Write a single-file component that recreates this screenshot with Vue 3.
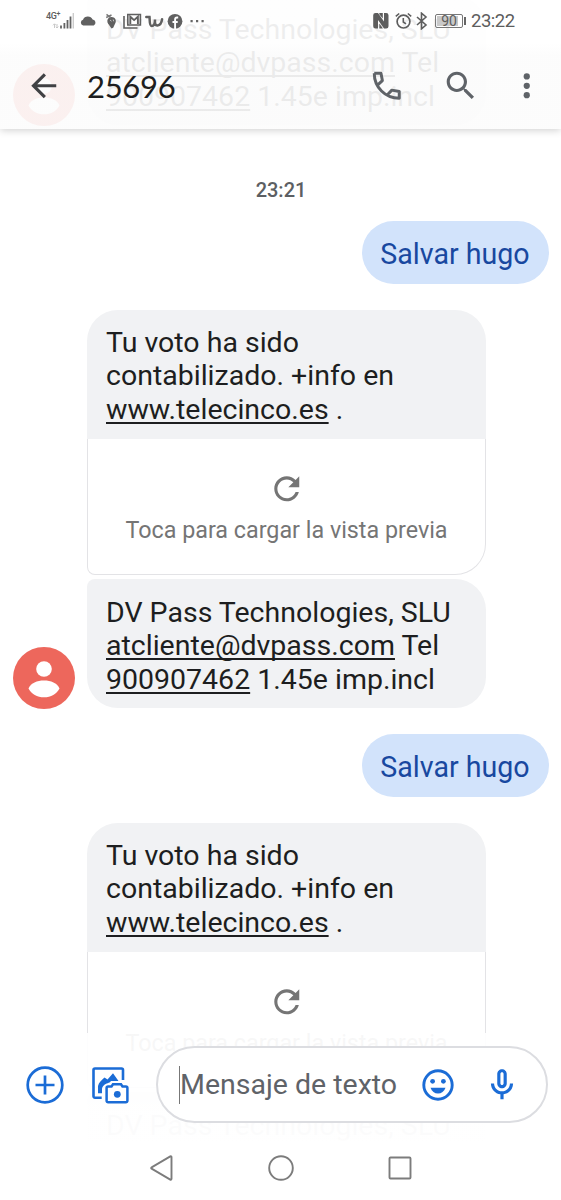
<script setup>
const messages = [
  { id: 1, type: 'legal', cls: 'first' },
  { id: 2, type: 'time', text: '23:21' },
  { id: 3, type: 'sent', text: 'Salvar hugo' },
  { id: 4, type: 'vote' },
  { id: 5, type: 'legal' },
  { id: 6, type: 'sent', text: 'Salvar hugo', cls: 'next' },
  { id: 7, type: 'vote' },
  { id: 8, type: 'legal' }
]
</script>

<template>
  <div class="phone">
    <main class="thread">
      <template v-for="m in messages" :key="m.id">
        <div v-if="m.type === 'time'" class="time">{{ m.text }}</div>

        <div v-else-if="m.type === 'sent'" class="sent" :class="m.cls">{{ m.text }}</div>

        <div v-else-if="m.type === 'vote'" class="vote">
          <div class="vote-text">
            <div class="line">Tu voto ha sido</div>
            <div class="line">contabilizado. +info en</div>
            <div class="line"><span class="link">www.telecinco.es</span> .</div>
          </div>
          <div class="preview">
            <svg class="icon" viewBox="0 0 24 24"><path d="M17.65 6.35C16.2 4.9 14.21 4 12 4c-4.42 0-7.99 3.58-7.99 8s3.57 8 7.99 8c3.73 0 6.84-2.55 7.73-6h-2.08c-.82 2.33-3.04 4-5.65 4-3.31 0-6-2.69-6-6s2.69-6 6-6c1.66 0 3.14.69 4.22 1.78L13 11h7V4l-2.35 2.35z" /></svg>
            <span>Toca para cargar la vista previa</span>
          </div>
        </div>

        <div v-else class="legal-row" :class="m.cls">
          <svg class="avatar" viewBox="0 0 62 62">
            <circle cx="31" cy="31" r="31" fill="#ed675c" />
            <circle cx="31" cy="22" r="7.8" fill="#fff" />
            <path d="M15.5 41.4C18 36 24 33.6 31 33.6S44 36 46.500 41.400C43.500 47 38 50.200 31 50.200S18.500 47 15.500 41.400Z" fill="#fff" />
          </svg>
          <div class="legal">
            <div class="line">DV Pass Technologies, SLU</div>
            <div class="line"><span class="link">atcliente@dvpass.com</span> Tel</div>
            <div class="line"><span class="link">900907462</span> 1.45e imp.incl</div>
          </div>
        </div>
      </template>
    </main>

    <header class="top">
      <div class="status">
        <div class="status-left">
          <span class="net">4G<sup>+</sup></span>
          <svg class="bars" width="22" height="18" viewBox="0 0 22 18">
            <path d="M2.500 16v-4M1 13.300l1.500-1.500 1.500 1.500M5 12v4M3.800 14.800L5 16l1.400-1.400" fill="none" stroke="#c8c8c8" stroke-width="1" />
            <path d="M9 13.500v3M12.400 11v5.500M15.500 8v8.500M18.500 4.500v12" stroke="#636363" stroke-width="1.800" />
            <path d="M21.300 1v15.500" stroke="#ccc" stroke-width="1.400" />
          </svg>
          <svg class="cloud" width="17" height="18" viewBox="0 0 17 18"><path d="M3.200 13.500a3 3 0 0 1-.2-5.800A5.200 5.200 0 0 1 12.600 7.600 3.100 3.100 0 0 1 13.700 13.500Z" fill="#606060" /></svg>
          <svg class="pin" width="12" height="18" viewBox="0 0 12 18">
            <path d="M6.500 16.500 3 11.500C1.600 9.200 2.300 5.700 5.800 5 9.500 4.500 11.600 7.500 10.500 10.700L8.200 15.800Z" fill="#606060" />
            <path d="M1.500 2.300l4.500 3.700M1.200 5.500 6.500 3" stroke="#777" stroke-width="1.500" />
            <path d="M5 8l1.500 1.200M8.200 7.500l.5 1.800" stroke="#ccc" stroke-width=".9" />
          </svg>
          <svg class="mail" width="19" height="18" viewBox="0 0 19 18">
            <path d="M4.800 2.500h12.600v10.500H4.800Z" fill="none" stroke="#606060" stroke-width="1.600" />
            <path d="M7.300 12V4.700l3.800 3.400 3.800-3.400V12" fill="none" stroke="#606060" stroke-width="1.900" />
            <path d="M1 4v12h13.500" fill="none" stroke="#606060" stroke-width="1.600" />
          </svg>
          <svg class="wish" width="19" height="18" viewBox="0 0 19 18">
            <path d="M1.300 5h3.200c.4 3-.3 9 2.200 9S10 10.200 10 7.500c-.2 3.500 0 6.200 2.500 6 2.600-.2 4.200-3.200 4.600-6.300" fill="none" stroke="#606060" stroke-width="2.500" stroke-linecap="round" />
          </svg>
          <svg class="fb" width="16" height="18" viewBox="0 0 16 18">
            <circle cx="8" cy="9.300" r="7.400" fill="#606060" />
            <path d="M11.200 5.500H10c-1.400 0-1.900.7-1.900 2v9.500M5.500 10h5.200" fill="none" stroke="#fff" stroke-width="1.900" />
          </svg>
          <svg class="more" width="14" height="18" viewBox="0 0 14 18"><path d="M.5 8h2.200v2.200H.5zM6 8h2.200v2.200H6zM11.500 8h2.200v2.200h-2.200z" fill="#666" /></svg>
        </div>
        <div class="status-right">
          <svg class="nfc" width="16" height="18" viewBox="0 0 16 18">
            <path d="M2.500 1H5l6 8.500V1h2.200A2.300 2.300 0 0 1 15.500 3.300v11a2.300 2.300 0 0 1-2.300 2.300H11L5 8v8.600H2.500A2.300 2.300 0 0 1 .2 14.300v-11A2.300 2.300 0 0 1 2.500 1Z" fill="#5d5d5d" />
            <path d="M6.300 1h3.500v5.500L6.300 2.200ZM6.300 11.500 9.700 16v.6H6.300Z" fill="#5d5d5d" />
          </svg>
          <svg class="alarm" width="17" height="18" viewBox="0 0 17 18">
            <circle cx="8.500" cy="9.600" r="6.400" fill="none" stroke="#5d5d5d" stroke-width="1.700" />
            <path d="M8.300 6v4l2.700 1.800M.8 4.300l3.400-2.800M12.800 1.500l3.400 2.800" fill="none" stroke="#5d5d5d" stroke-width="1.600" />
          </svg>
          <svg class="bt" width="12" height="18" viewBox="0 0 12 18"><path d="M1 5l9 8-4.500 3.800V1.200L10 5l-9 8" fill="none" stroke="#5d5d5d" stroke-width="1.600" /></svg>
          <div class="battery">90</div>
          <span class="clock">23:22</span>
        </div>
      </div>
      <div class="bar">
        <svg class="icon back" viewBox="0 0 24 24"><path d="M20 11H7.830l5.590-5.590L12 4l-8 8 8 8 1.410-1.410L7.830 13H20v-2z" /></svg>
        <h1>25696</h1>
        <svg class="icon call" viewBox="0 0 24 24"><path d="M4 4h4.300l.9 4.700-3.300 3.100M4 4c0 9 7 16 16 16v-4.300l-4.700-.9-3.200 3.300" fill="none" stroke="#5f6368" stroke-width="1.900" stroke-linejoin="round" /></svg>
        <svg class="icon search" viewBox="0 0 24 24"><path d="M15.500 14h-.79l-.28-.27C15.410 12.590 16 11.110 16 9.500 16 5.910 13.090 3 9.500 3S3 5.910 3 9.500 5.910 16 9.500 16c1.610 0 3.090-.59 4.230-1.570l.27.28v.79l5 4.990L20.490 19l-4.990-5zm-6 0C7.010 14 5 11.990 5 9.500S7.010 5 9.500 5 14 7.010 14 9.500 11.990 14 9.500 14z" /></svg>
        <svg class="icon menu" viewBox="0 0 24 24"><circle cx="12" cy="6" r="2" /><circle cx="12" cy="12" r="2" /><circle cx="12" cy="18" r="2" /></svg>
      </div>
    </header>

    <footer class="bottom">
      <div class="composer">
        <svg class="plus" width="38" height="38" viewBox="0 0 38 38"><circle cx="19" cy="19" r="17.300" /><path d="M19 9.500v19M9.500 19h19" /></svg>
        <svg class="gallery" width="38" height="38" viewBox="0 0 38 38">
          <path d="M10.700 31.700H4a1.500 1.500 0 0 1-1.500-1.500V4A1.500 1.500 0 0 1 4 2.500h26.500A1.500 1.500 0 0 1 32 4V14" fill="none" stroke="#1b6cd6" stroke-width="2.600" />
          <path d="M7 27.300V20C7.800 16.500 10.500 14.500 13.500 11.500l3 2L22 7.200l5.500 7.800H20c-1.500 2.500-5 2-7 4.200-1.500 1.500-2 2.500-2 4.300v3.800Z" fill="#1b6cd6" />
          <path d="M17.100 20.500h3.400l1.500-2.200h8l1.500 2.200h3.400a1.500 1.500 0 0 1 1.500 1.500v12.800a1.500 1.500 0 0 1-1.500 1.500H17.100a1.500 1.500 0 0 1-1.500-1.500V22a1.500 1.500 0 0 1 1.500-1.500Z" fill="#fff" stroke="#1b6cd6" stroke-width="2.500" />
          <circle cx="26.300" cy="28.300" r="3.400" fill="#1b6cd6" />
        </svg>
        <div class="field">
          <i class="caret"></i>
          <span class="hint">Mensaje de texto</span>
          <svg class="smile" width="32" height="32" viewBox="0 0 32 32"><circle cx="16" cy="16" r="14.200" fill="none" stroke="#1b6cd6" stroke-width="2.900" /><circle cx="10.600" cy="12.300" r="2.400" /><circle cx="21.400" cy="12.300" r="2.400" /><path d="M8.500 18.700h15c-1.300 3.700-4.100 5.800-7.500 5.800s-6.200-2.100-7.500-5.800Z" /></svg>
          <svg class="mic" width="38" height="38" viewBox="0 0 24 24"><path d="M12 14c1.660 0 3-1.340 3-3V5c0-1.660-1.340-3-3-3S9 3.340 9 5v6c0 1.660 1.340 3 3 3zm-1-9c0-.55.45-1 1-1s1 .45 1 1v6c0 .55-.45 1-1 1s-1-.45-1-1V5zm6 6c0 2.760-2.240 5-5 5s-5-2.240-5-5H5c0 3.530 2.610 6.430 6 6.920V21h2v-3.080c3.390-.49 6-3.390 6-6.920h-2z" /></svg>
        </div>
      </div>
      <nav class="nav">
        <svg width="26" height="28" viewBox="0 0 26 28"><path d="M22.500 3v22a.8.8 0 0 1-1.200.6L2.600 14.700a.8.8 0 0 1 0-1.400L21.300 2.400a.8.8 0 0 1 1.200.6Z" /></svg>
        <svg width="28" height="28" viewBox="0 0 28 28"><circle cx="14" cy="14" r="11.800" /></svg>
        <svg width="26" height="28" viewBox="0 0 26 28"><rect x="2.500" y="3.500" width="21" height="21" rx="1" /></svg>
      </nav>
    </footer>
  </div>
</template>

<style scoped>
* { box-sizing: border-box; }
.phone {
  width: 561px; height: 1200px; overflow: hidden; background: #fff;
  display: grid; grid-template: 129px 904px 167px / 561px;
  font-family: Roboto, "Noto Sans", sans-serif; color: #1d1e20;
}
.icon { width: 37.5px; height: 37.5px; flex: none; fill: #5f6368; }
.thread {
  grid-area: 1 / 1 / 4 / 2; height: 1200px; overflow: hidden;
  display: flex; flex-direction: column;
}
.thread > * { flex: none; }
.line { white-space: pre; height: 33.3px; line-height: 33.3px; font-size: 28.5px; }
.link { text-decoration: underline; text-decoration-thickness: 1.5px; text-underline-offset: 3px; text-decoration-skip-ink: none; }
.legal-row { display: flex; align-items: flex-end; padding-left: 12.5px; margin-top: 4px; }
.first { margin-top: -4px; }
.avatar { width: 62px; height: 62px; margin: 0 12.5px -.5px 0; }
.legal { width: 399px; height: 129px; padding: 17px 0 0 19px; background: #f1f2f4; border-radius: 8px 31px 31px 31px; }
.time { margin: 50px 0 0 1px; height: 30px; line-height: 30px; font-size: 20px; font-weight: 500; color: #5c5f63; text-align: center; }
.sent {
  align-self: flex-end; margin: 16px 12.5px 0 0; width: 187px; height: 63px; border-radius: 32px;
  background: #d2e3fb; color: #1848a0; font-size: 28.6px; line-height: 67px; text-align: center; white-space: nowrap;
}
.next { margin-top: 26px; }
.vote { margin: 25.5px 0 0 87px; width: 399px; }
.vote-text { height: 129px; padding: 16.500px 0 0 19px; background: #f1f2f4; border-radius: 31px 31px 0 0; }
.preview {
  height: 136.5px; border: 1.500px solid #e3e3e6; border-top: 0; border-radius: 0 0 31px 8px;
  display: flex; flex-direction: column; align-items: center; padding-top: 31px;
  color: #757575; font-size: 23.3px; line-height: 46px; white-space: nowrap;
}
.preview .icon { fill: #757575; }

.top {
  grid-area: 1 / 1; z-index: 1; display: flex; flex-direction: column;
  background: linear-gradient(rgba(255,255,255,.92) 0 43px, rgba(252,252,252,.92) 55px);
  box-shadow: 0 1px 8px rgba(0,0,0,.2);
}
.status { height: 43px; display: flex; justify-content: space-between; padding: 12px 46px 0 46px; color: #5d5d5d; }
.status-left, .status-right { display: flex; height: 18px; }
.net { width: 6px; font-size: 9px; line-height: 9px; font-weight: 500; white-space: nowrap; overflow: visible; letter-spacing: -.4px; }
.net sup { font-size: 7px; line-height: 0; vertical-align: 3px; }
.cloud { margin-left: 6px; }
.pin { margin-left: 8px; }
.mail { margin-left: 6px; }
.wish { margin-left: 3px; }
.fb { margin-left: 3px; }
.more { margin-left: 7px; }
.nfc { margin-right: 6px; }
.bt { margin-left: 4px; }
.battery {
  position: relative; margin: 2px 8px 0 7px; width: 28px; height: 14px; border: 1px solid #777; border-radius: 2px;
  background: linear-gradient(90deg, #c9c9c9 22px, #fff 22px); background-clip: content-box; padding: 1px;
  font-size: 14px; line-height: 11px; text-align: center;
}
.battery::after { content: ""; position: absolute; left: 28px; top: 2px; width: 2px; height: 8px; background: #666; }
.clock { font-size: 18.5px; line-height: 19px; width: 44px; white-space: nowrap; letter-spacing: -.5px; }
.bar { height: 86px; display: flex; align-items: center; padding: 0 0 1px 24.500px; }
.back { fill: #404144; }
h1 { margin: 0 0 0 25px; width: 280.500px; font: 400 31px/40px Lato, Roboto, sans-serif; color: #1d1e20; letter-spacing: -.3px; }
.search { margin-left: 37px; }
.menu { margin-left: 28px; }

.bottom {
  grid-area: 3 / 1; z-index: 1;
  background: linear-gradient(rgba(255,255,255,.94) 60px, rgba(255,255,255,.985) 80px 105px, #fff 110px);
}
.composer { display: flex; align-items: center; height: 103px; padding-left: 26px; }
.plus { fill: none; stroke: #1b6cd6; stroke-width: 2.700; }
.gallery { margin-left: 27px; }
.field {
  margin-left: 27px; width: 392px; height: 77px; border: 2px solid #dcdde1; border-radius: 39px; background: #fff;
  display: flex; align-items: center; padding-left: 21px; fill: #1b6cd6;
}
.caret { width: 1px; height: 38px; background: #777; }
.hint { width: 242px; color: #5f6368; font-size: 28.5px; line-height: 36px; padding-top: 1px; white-space: nowrap; }
.mic { margin-left: 29px; }
.nav { height: 64px; display: flex; align-items: center; justify-content: space-between; padding: 0 148.500px; fill: none; stroke: #7c7c7c; stroke-width: 1.900; }
</style>

<style>
body { margin: 0; background: #fff; }
</style>
